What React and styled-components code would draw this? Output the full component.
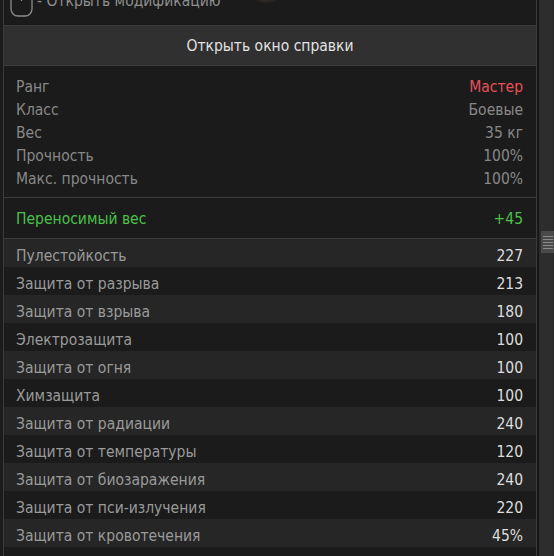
import React from 'react';
import styled, { createGlobalStyle } from 'styled-components';

const GlobalStyle = createGlobalStyle`
  html, body {
    margin: 0;
    padding: 0;
    background: #1c1c1c;
    overflow: hidden;
  }
  * {
    box-sizing: border-box;
  }
`;

const info = [
  { label: 'Ранг', value: 'Мастер', accent: 'red' },
  { label: 'Класс', value: 'Боевые' },
  { label: 'Вес', value: '35 кг' },
  { label: 'Прочность', value: '100%' },
  { label: 'Макс. прочность', value: '100%' },
];

const stats = [
  ['Пулестойкость', '227'],
  ['Защита от разрыва', '213'],
  ['Защита от взрыва', '180'],
  ['Электрозащита', '100'],
  ['Защита от огня', '100'],
  ['Химзащита', '100'],
  ['Защита от радиации', '240'],
  ['Защита от температуры', '120'],
  ['Защита от биозаражения', '240'],
  ['Защита от пси-излучения', '220'],
  ['Защита от кровотечения', '45%'],
];

const App = () => (
  <>
    <GlobalStyle />
    <Screen>
      <Panel>
        <Hint>
          <MouseIcon width="23" height="32" viewBox="0 0 23 32">
            <rect x="1" y="1" width="21" height="30" rx="7" fill="none" stroke="#8c8c8c" strokeWidth="1.3" />
            <line x1="11.5" y1="1" x2="11.5" y2="16" stroke="#8c8c8c" strokeWidth="1.3" />
          </MouseIcon>
          <HintText>- Открыть модификацию</HintText>
          <Blob />
        </Hint>

        <HelpButton>Открыть окно справки</HelpButton>

        <InfoSection>
          {info.map((row) => (
            <InfoRow key={row.label}>
              <span>{row.label}</span>
              <InfoValue $accent={row.accent}>{row.value}</InfoValue>
            </InfoRow>
          ))}
        </InfoSection>

        <CarrySection>
          <span>Переносимый вес</span>
          <span>+45</span>
        </CarrySection>

        <StatList>
          {stats.map(([label, value], i) => (
            <StatRow key={label} $odd={i % 2 === 0}>
              <StatLabel>{label}</StatLabel>
              <StatValue>{value}</StatValue>
            </StatRow>
          ))}
        </StatList>
      </Panel>

      <Scrollbar>
        <Thumb>
          <Grip />
          <Grip />
          <Grip />
          <Grip />
          <Grip />
        </Thumb>
      </Scrollbar>
    </Screen>
  </>
);

const Screen = styled.div`
  display: flex;
  width: 554px;
  height: 556px;
  overflow: hidden;
  font-family: 'DejaVu Sans Condensed', 'DejaVu Sans', 'Liberation Sans', sans-serif;
`;

const Panel = styled.div`
  margin-left: 3px;
  width: 535px;
  display: flex;
  flex-direction: column;
  background: #1b1b1b;
  border-left: 1px solid #3a3a3a;
  border-right: 1px solid #3a3a3a;
`;

const Hint = styled.div`
  position: relative;
  height: 26px;
  flex-shrink: 0;
  display: flex;
  align-items: flex-start;
  gap: 4px;
  padding-left: 6px;
  overflow: hidden;
  border-bottom: 1px solid #3c3c3c;
  background: #1b1b1b;
`;

const MouseIcon = styled.svg`
  margin-top: -15px;
  flex-shrink: 0;
`;

const HintText = styled.span`
  margin-top: -10px;
  font-size: 15.5px;
  line-height: 22px;
  color: #8f8f8f;
`;

const Blob = styled.div`
  position: absolute;
  left: 250px;
  top: -8px;
  width: 24px;
  height: 11px;
  border-radius: 50%;
  background: radial-gradient(ellipse at center, #3a342c 0%, #262320 60%, transparent 100%);
`;

const HelpButton = styled.div`
  height: 40px;
  flex-shrink: 0;
  display: flex;
  align-items: center;
  justify-content: center;
  background: #303030;
  border-bottom: 1px solid #3c3c3c;
  color: #e2e2e2;
  font-size: 15.5px;
`;

const InfoSection = styled.div`
  display: flex;
  flex-direction: column;
  padding: 9px 13px 7px 12px;
  border-bottom: 1px solid #3c3c3c;
`;

const InfoRow = styled.div`
  height: 23px;
  display: flex;
  align-items: center;
  justify-content: space-between;
  color: #888888;
  font-size: 15.5px;
`;

const InfoValue = styled.span`
  color: ${(p) => (p.$accent === 'red' ? '#e8505a' : '#888888')};
`;

const CarrySection = styled.div`
  height: 41px;
  flex-shrink: 0;
  display: flex;
  align-items: center;
  justify-content: space-between;
  padding: 2px 13px 0 12px;
  border-bottom: 1px solid #3c3c3c;
  color: #4cc04a;
  font-size: 15.5px;
`;

const StatList = styled.div`
  display: flex;
  flex-direction: column;
`;

const StatRow = styled.div`
  height: 28px;
  display: flex;
  align-items: center;
  justify-content: space-between;
  padding: 5px 13px 0 12px;
  background: ${(p) => (p.$odd ? '#262626' : '#1b1b1b')};
  font-size: 15.5px;
`;

const StatLabel = styled.span`
  color: #9a9a9a;
`;

const StatValue = styled.span`
  color: #dedede;
`;

const Scrollbar = styled.div`
  position: relative;
  width: 16px;
  height: 100%;
  margin-left: 1px;
  background: #2d2d2d;
  border-left: 1px solid #141414;
  border-right: 1px solid #262626;
`;

const Thumb = styled.div`
  position: absolute;
  top: 231px;
  left: 2px;
  width: 13px;
  height: 22px;
  background: #4a4a4a;
  display: flex;
  flex-direction: column;
  justify-content: center;
  gap: 2px;
  padding: 0 1px 0 2px;
`;

const Grip = styled.div`
  height: 1px;
  background: #8a8a8a;
`;

export default App;
